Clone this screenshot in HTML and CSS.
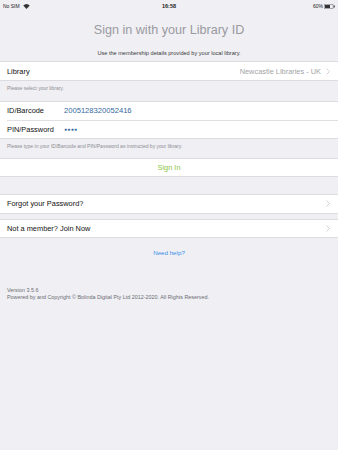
FILE: index.html
```html
<!DOCTYPE html>
<html lang="en">
<head>
    <meta charset="UTF-8">
    <title>Sign in</title>
    <link rel="stylesheet" href="styles.css">
</head>
<body>

    <div class="status-bar">
        <div class="status-left">No SIM
            <svg width="7" height="5" viewBox="0 0 14 10"><path d="M7 10 L0.5 3.2 A9.5 9.5 0 0 1 13.5 3.2 Z" fill="#333"/></svg>
        </div>
        <div class="status-time">16:58</div>
        <div class="status-right">60%
            <svg width="11" height="5" viewBox="0 0 22 10"><rect x="0.5" y="0.5" width="18" height="9" rx="2" fill="none" stroke="#333"/><rect x="2" y="2" width="10" height="6" fill="#333"/><rect x="19.5" y="3" width="2" height="4" fill="#333"/></svg>
        </div>
    </div>

    <h1 class="title">Sign in with your Library ID</h1>
    <p class="subtitle">Use the membership details provided by your local library.</p>

    <div class="group first">
        <div class="row">
            <span class="label">Library</span>
            <span class="detail">Newcastle Libraries - UK</span>
            <svg class="chevron" width="4" height="7" viewBox="0 0 4 7"><polyline points="0.5,0.5 3.5,3.5 0.5,6.5" fill="none" stroke="#c7c7cc" stroke-width="0.8"/></svg>
        </div>
    </div>
    <div class="caption tall">Please select your library.</div>

    <div class="group">
        <div class="row field">
            <span class="label fixed">ID/Barcode</span>
            <span class="value">2005128320052416</span>
        </div>
        <div class="row field last">
            <span class="label fixed">PIN/Password</span>
            <span class="value dots">&#9679;&#9679;&#9679;&#9679;</span>
        </div>
    </div>
    <div class="caption">Please type in your ID/Barcode and PIN/Password as instructed by your library.</div>

    <div class="group">
        <div class="row center short">
            <span class="sign-in">Sign In</span>
        </div>
    </div>

    <div class="group spaced">
        <div class="row">
            <span class="label">Forgot your Password?</span>
            <svg class="chevron" width="4" height="7" viewBox="0 0 4 7"><polyline points="0.5,0.5 3.5,3.5 0.5,6.5" fill="none" stroke="#c7c7cc" stroke-width="0.8"/></svg>
        </div>
    </div>

    <div class="group small-gap">
        <div class="row short">
            <span class="label">Not a member? Join Now</span>
            <svg class="chevron" width="4" height="7" viewBox="0 0 4 7"><polyline points="0.5,0.5 3.5,3.5 0.5,6.5" fill="none" stroke="#c7c7cc" stroke-width="0.8"/></svg>
        </div>
    </div>

    <div class="help">Need help?</div>

    <div class="footer">
        <div>Version 3.5.6</div>
        <div>Powered by and Copyright &copy; Bolinda Digital Pty Ltd 2012-2020. All Rights Reserved.</div>
    </div>

</body>
</html>
```

FILE: styles.css
```css
body {
    margin: 0;
    background-color: #efeff4;
    font-family: "Liberation Sans", Arial, sans-serif;
    color: #111;
}

.status-bar {
    display: flex;
    justify-content: space-between;
    align-items: center;
    height: 12px;
    padding: 0 3px;
    font-size: 5px;
    color: #222;
}

.status-left, .status-right {
    display: flex;
    align-items: center;
    gap: 3px;
    width: 60px;
}

.status-right {
    justify-content: flex-end;
    gap: 1px;
}

.status-time {
    font-weight: bold;
    font-size: 5.5px;
}

.title {
    margin: 9px 0 0;
    font-size: 12.6px;
    line-height: 18px;
    font-weight: normal;
    color: #9a9aa0;
    text-align: center;
}

.subtitle {
    margin: 10px 0 0;
    font-size: 5.6px;
    line-height: 8px;
    color: #3a3a3c;
    text-align: center;
}

.group {
    background: #fff;
    border-top: 1px solid #dcdce0;
    border-bottom: 1px solid #dcdce0;
}

.group.first {
    margin-top: 4px;
}

.group.spaced {
    margin-top: 17px;
}

.group.small-gap {
    margin-top: 5px;
}

.row {
    display: flex;
    align-items: center;
    height: 18px;
    padding: 0 7px 0 7px;
    font-size: 7.4px;
}

.row.short {
    height: 17px;
}

.row.field {
    height: 17.5px;
    border-bottom: 0.5px solid #e0e0e4;
    margin-left: 7px;
    padding-left: 0;
}

.row.field.last {
    height: 17px;
    border-bottom: none;
}

.row.center {
    justify-content: center;
}

.label {
    flex: 1;
    color: #111;
}

.label.fixed {
    flex: none;
    width: 57px;
}

.detail {
    color: #a3a3a8;
    margin-right: 5px;
}

.value {
    color: #34689e;
    font-size: 7.6px;
}

.value.dots {
    font-size: 5px;
    letter-spacing: 0.3px;
}

.chevron {
    margin-right: 1px;
}

.sign-in {
    color: #8cc63f;
}

.caption {
    height: 19px;
    padding: 3px 7px 0;
    box-sizing: border-box;
    font-size: 5px;
    line-height: 8px;
    color: #8e8e93;
}

.caption.tall {
    height: 20px;
}

.help {
    margin-top: 11px;
    text-align: center;
    font-size: 6.2px;
    line-height: 8px;
    color: #3b8fe6;
}

.footer {
    margin-top: 30px;
    padding: 0 7px;
    font-size: 5.4px;
    line-height: 7px;
    color: #6d6d72;
}
```
